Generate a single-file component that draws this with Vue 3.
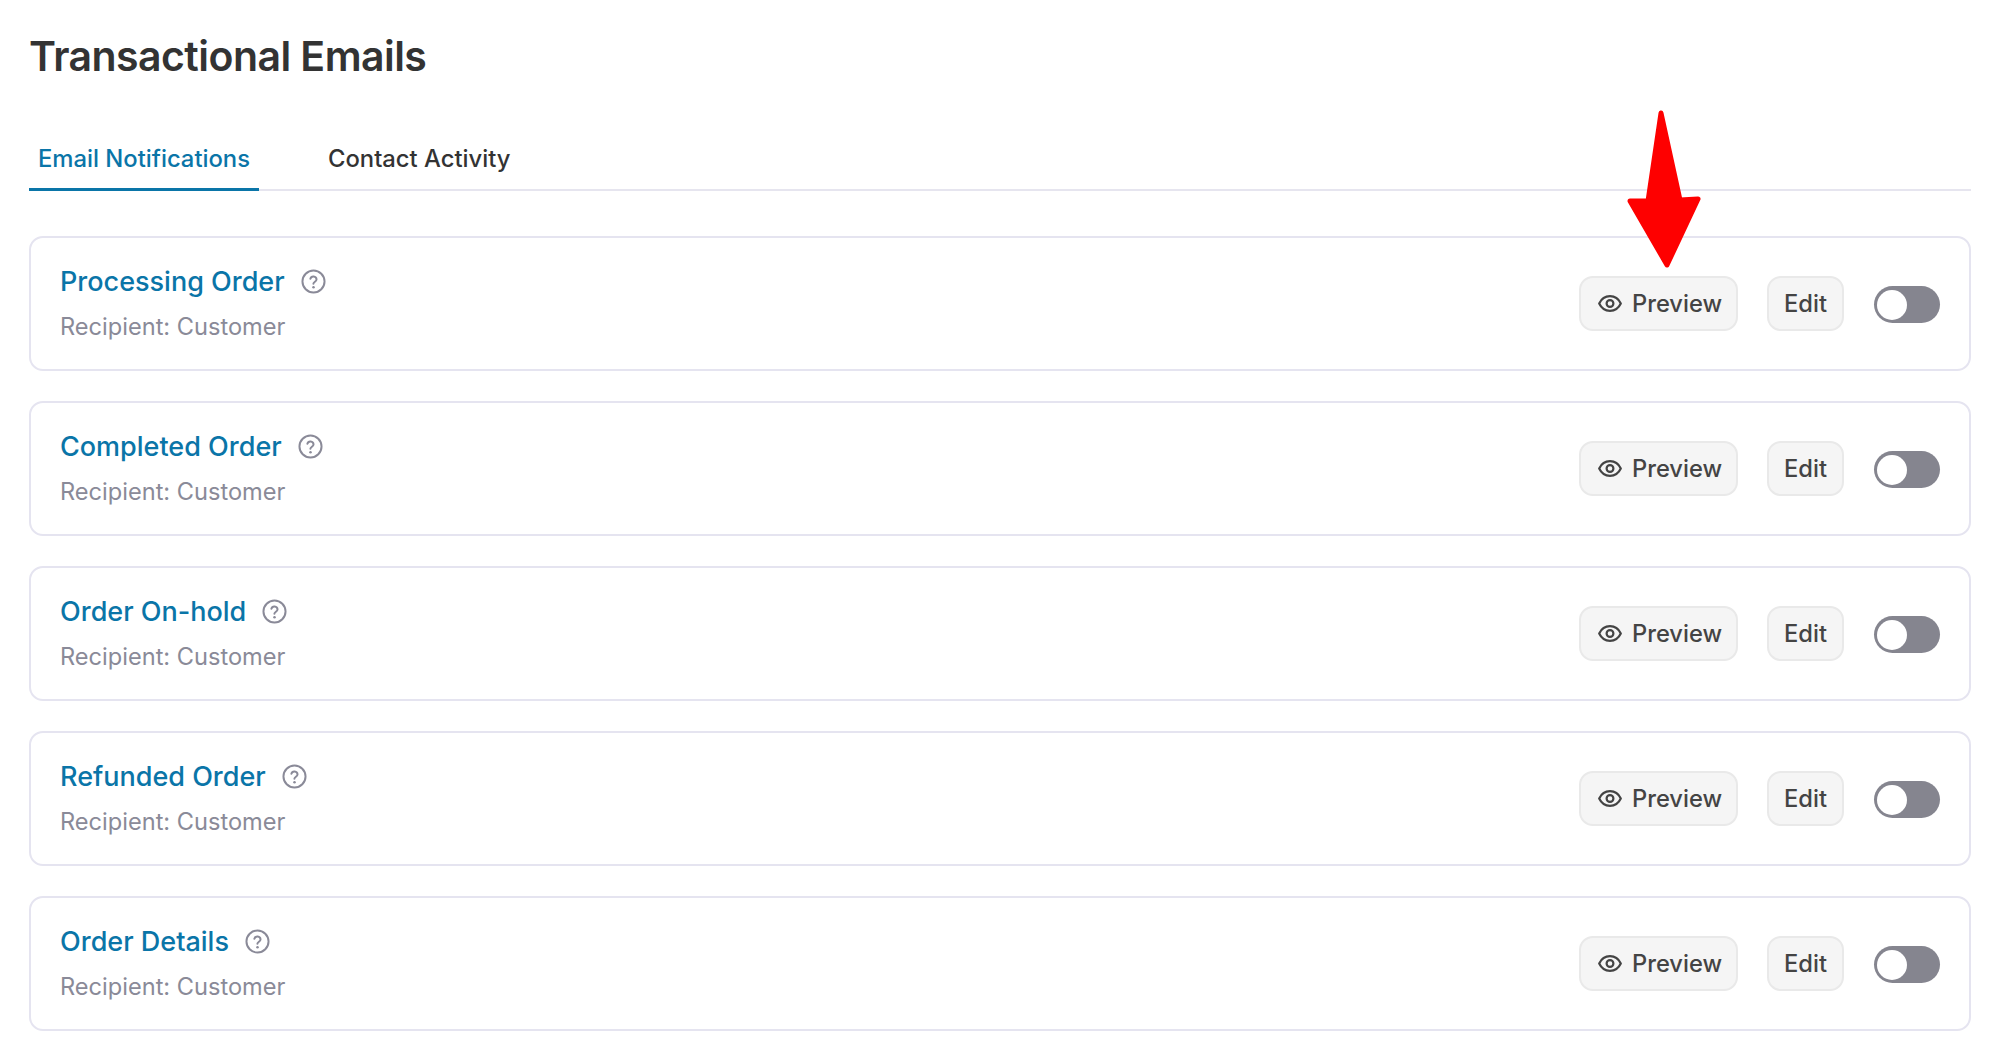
<script setup>
const rows = ['Processing Order', 'Completed Order', 'Order On-hold', 'Refunded Order', 'Order Details']
</script>

<template>
  <div class="page">
    <h1 class="title">Transactional Emails</h1>
    <div class="tabs">
      <div class="tab active">Email Notifications</div>
      <div class="tab">Contact Activity</div>
    </div>
    <div class="list">
      <div v-for="r in rows" :key="r" class="card">
        <div class="info">
          <div class="name-row">
            <span class="name">{{ r }}</span>
            <svg class="help" viewBox="0 0 24 24" width="25" height="25" fill="none">
              <circle cx="12" cy="12" r="10.6" stroke="#8a8a98" stroke-width="1.9" />
              <path d="M9 9.4a3 3 0 0 1 5.9.6c0 2-3 2.4-3 4.2" stroke="#8a8a98" stroke-width="1.9" stroke-linecap="round" />
              <circle cx="12" cy="17.6" r="1.2" fill="#8a8a98" />
            </svg>
          </div>
          <div class="recipient">Recipient: Customer</div>
        </div>
        <div class="actions">
          <button class="btn preview">
            <svg viewBox="0 0 24 17" width="24" height="17" fill="none">
              <path d="M1.2 8.5C3.5 3.6 7.4 1.2 12 1.2S20.5 3.6 22.8 8.5C20.5 13.4 16.6 15.8 12 15.8S3.5 13.4 1.2 8.5Z" stroke="#444" stroke-width="2.2" stroke-linejoin="round" />
              <circle cx="12" cy="8.5" r="3.4" stroke="#444" stroke-width="2.2" />
            </svg>
            Preview
          </button>
          <button class="btn edit">Edit</button>
          <span class="toggle"><span class="knob"></span></span>
        </div>
      </div>
    </div>
    <svg class="arrow" viewBox="0 0 1999 1051" width="1999" height="1051">
      <path d="M1661 113 L1648 201 L1630 201 L1667 265 L1698 199 L1680 200 Z" fill="#fe0000" stroke="#fe0000" stroke-width="5" stroke-linejoin="round" />
    </svg>
  </div>
</template>

<style scoped>
.page {
  position: relative;
  box-sizing: border-box;
  width: 1999px;
  height: 1051px;
  padding: 30px 28px 0 29px;
  background: #fff;
  font-family: Inter, "Liberation Sans", sans-serif;
  overflow: hidden;
}
.title {
  margin: 0;
  font-size: 41px;
  line-height: 52px;
  font-weight: 600;
  color: #333;
  letter-spacing: -0.55px;
}
.tabs {
  display: flex;
  gap: 50px;
  margin-top: 53px;
  height: 54px;
  border-bottom: 2px solid #e6e5ef;
}
.tab {
  box-sizing: border-box;
  height: 56px;
  padding: 0 9px;
  font-size: 23.8px;
  line-height: 48px;
  font-weight: 500;
  color: #333;
}
.tab + .tab {
  margin-left: 10px;
}
.tab.active {
  color: #0a75a8;
  border-bottom: 3px solid #0a75a8;
}
.list {
  display: flex;
  flex-direction: column;
  gap: 30px;
  margin-top: 45px;
}
.card {
  box-sizing: border-box;
  display: flex;
  align-items: center;
  justify-content: space-between;
  height: 135px;
  padding: 0 29px;
  border: 2px solid #e5e4f0;
  border-radius: 14px;
}
.info {
  display: flex;
  flex-direction: column;
  gap: 11px;
  margin-top: 1px;
}
.name-row {
  display: flex;
  align-items: center;
  gap: 16px;
  height: 34px;
}
.name {
  font-size: 27px;
  font-weight: 500;
  color: #0a75a8;
}
.recipient {
  font-size: 23.6px;
  line-height: 34px;
  color: #8a8a98;
}
.actions {
  display: flex;
  align-items: center;
}
.btn {
  box-sizing: border-box;
  display: flex;
  align-items: center;
  height: 55px;
  border: 2px solid #e9e9e9;
  border-radius: 14px;
  background: #f5f5f5;
  font-family: inherit;
  font-size: 23.7px;
  font-weight: 500;
  color: #444;
}
.preview {
  width: 159px;
  padding: 0 0 0 17px;
  gap: 10px;
}
.edit {
  width: 77px;
  margin-left: 29px;
  justify-content: center;
  padding: 0;
}
.toggle {
  box-sizing: border-box;
  display: flex;
  align-items: center;
  width: 66px;
  height: 37px;
  margin: 2px 0 0 30px;
  padding-left: 3px;
  border-radius: 19px;
  background: #85858f;
}
.knob {
  width: 30px;
  height: 30px;
  border-radius: 50%;
  background: #fff;
}
.arrow {
  position: absolute;
  left: 0;
  top: 0;
  pointer-events: none;
}
</style>
